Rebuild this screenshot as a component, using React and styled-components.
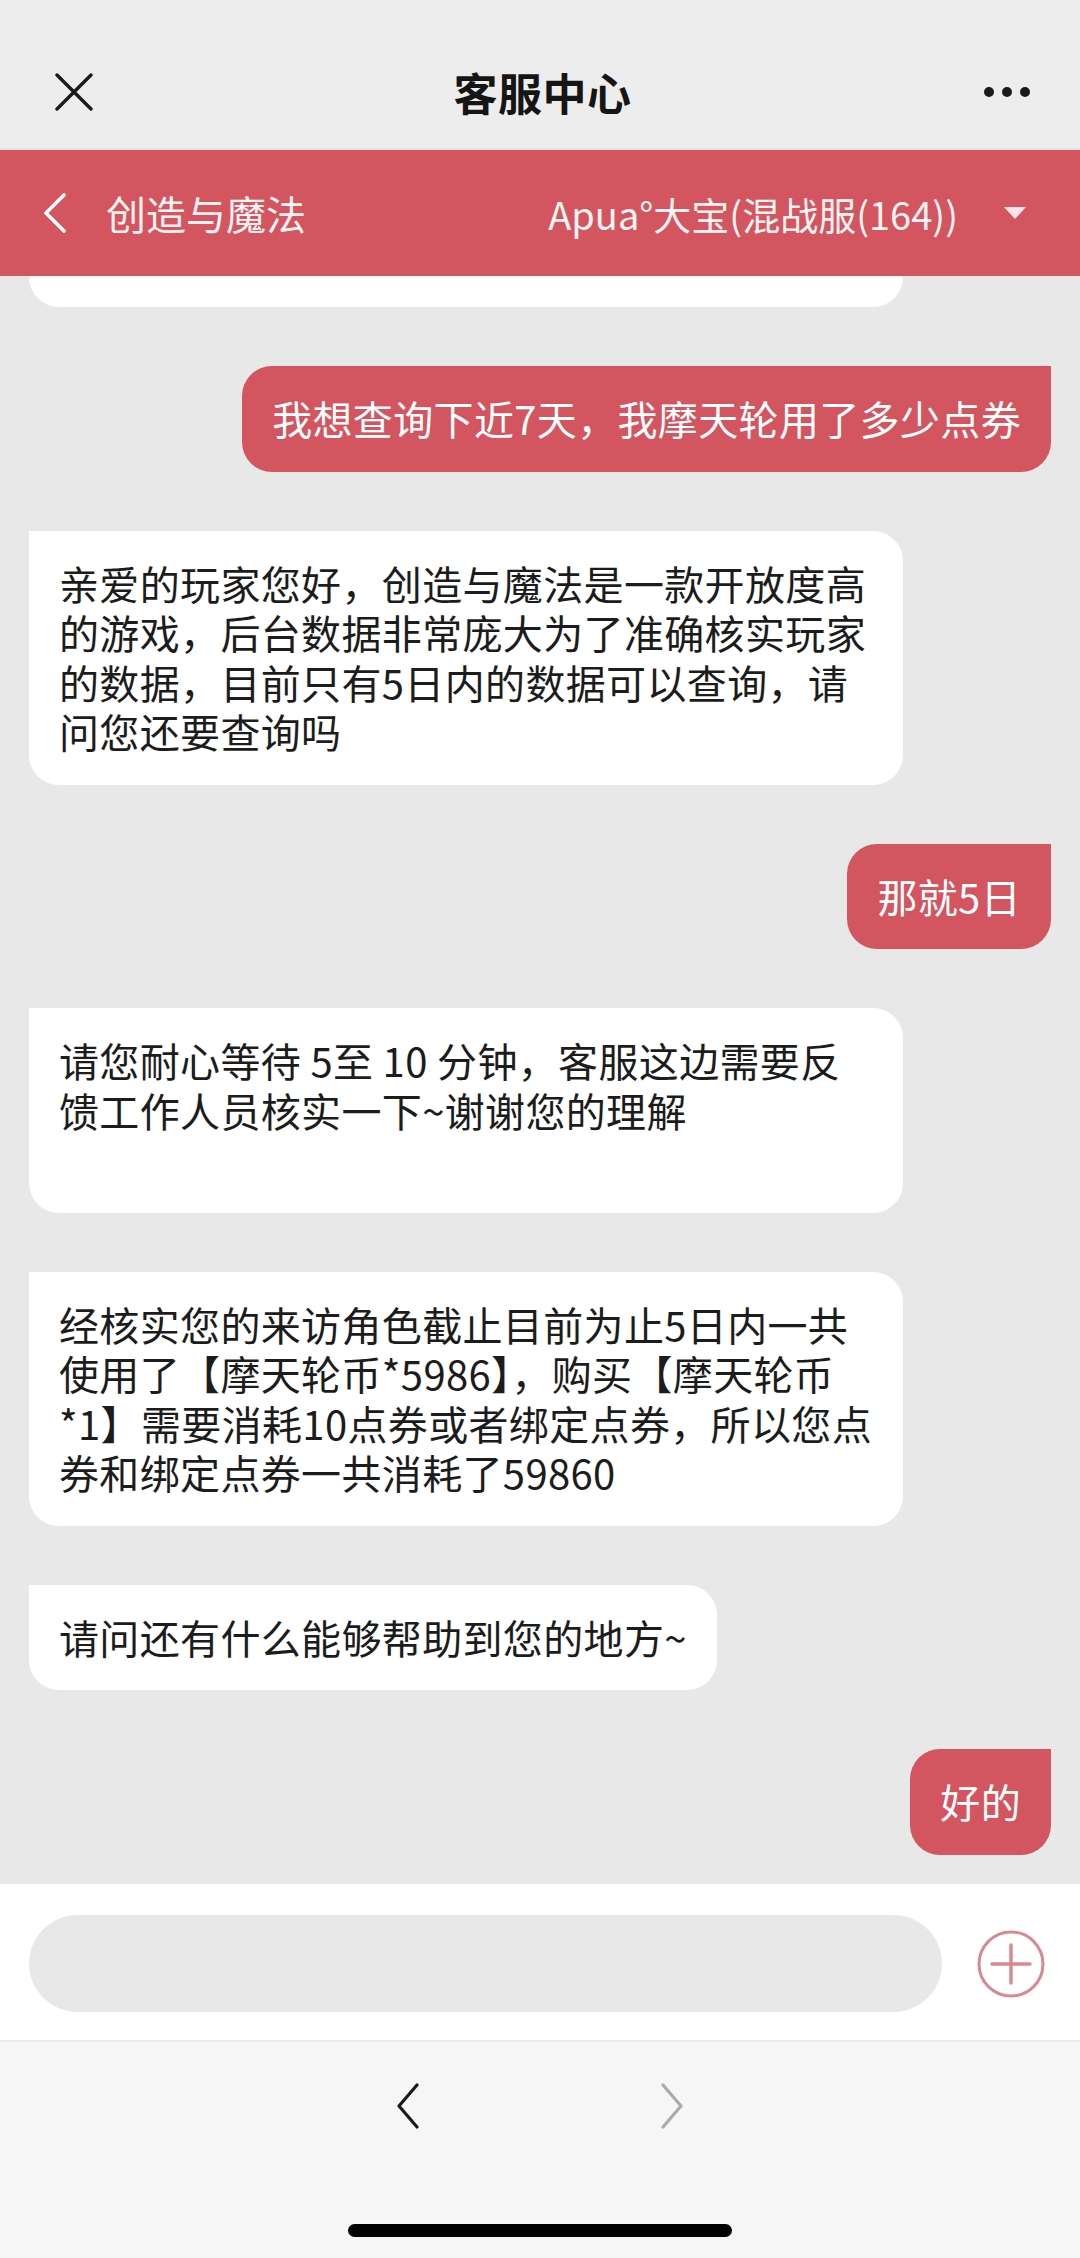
import React from 'react';
import styled, { createGlobalStyle } from 'styled-components';

const RED = '#d3555f';

const GlobalStyle = createGlobalStyle`
  * { box-sizing: border-box; }
  html, body { margin: 0; padding: 0; background: #e8e8e8; }
  body {
    font-family: "Noto Sans CJK SC", "Noto Sans", "Liberation Sans", sans-serif;
  }
`;

const messages = [
  { mine: true, text: '我想查询下近7天，我摩天轮用了多少点券' },
  {
    mine: false,
    full: true,
    text: '亲爱的玩家您好，创造与魔法是一款开放度高\n的游戏，后台数据非常庞大为了准确核实玩家\n的数据，目前只有5日内的数据可以查询，请\n问您还要查询吗',
  },
  { mine: true, text: '那就5日' },
  {
    mine: false,
    full: true,
    text: '请您耐心等待 5至 10 分钟，客服这边需要反\n馈工作人员核实一下~谢谢您的理解\n ',
  },
  {
    mine: false,
    full: true,
    text: '经核实您的来访角色截止目前为止5日内一共\n使用了【摩天轮币*5986】，购买【摩天轮币\n*1】需要消耗10点券或者绑定点券，所以您点\n券和绑定点券一共消耗了59860',
  },
  { mine: false, text: '请问还有什么能够帮助到您的地方~' },
  { mine: true, text: '好的' },
];

const App = () => {
  return (
    <Page>
      <GlobalStyle />
      <TopNav>
        <NavSide>
          <svg width="38" height="38" viewBox="0 0 38 38">
            <path d="M2 2 L36 36 M36 2 L2 36" stroke="#1a1a1a" strokeWidth="3.4" strokeLinecap="round" />
          </svg>
        </NavSide>
        <Title>客服中心</Title>
        <NavSide $right>
          <svg width="46" height="10" viewBox="0 0 46 10">
            <circle cx="5" cy="5" r="5" fill="#1a1a1a" />
            <circle cx="23" cy="5" r="5" fill="#1a1a1a" />
            <circle cx="41" cy="5" r="5" fill="#1a1a1a" />
          </svg>
        </NavSide>
      </TopNav>

      <GameBar>
        <svg width="26" height="40" viewBox="0 0 26 40">
          <path d="M22 2 L4 20 L22 38" fill="none" stroke="#fff" strokeWidth="3.6" strokeLinecap="round" strokeLinejoin="round" />
        </svg>
        <GameName>创造与魔法</GameName>
        <RoleName>Apua°大宝(混战服(164))</RoleName>
        <Caret />
      </GameBar>

      <Chat>
        <CutBubble />
        {messages.map((m, i) => (
          <Bubble key={i} $mine={m.mine} $full={m.full}>
            {m.text}
          </Bubble>
        ))}
      </Chat>

      <InputBar>
        <InputPill />
        <svg width="68" height="68" viewBox="0 0 68 68">
          <circle cx="34" cy="34" r="32" fill="none" stroke="#db8790" strokeWidth="3" />
          <path d="M15 34 H53 M34 15 V53" stroke="#db8790" strokeWidth="3.4" strokeLinecap="round" />
        </svg>
      </InputBar>

      <BrowserBar>
        <NavArrows>
          <svg width="26" height="46" viewBox="0 0 26 46">
            <path d="M22 2 L4 23 L22 44" fill="none" stroke="#1a1a1a" strokeWidth="3.2" strokeLinecap="round" strokeLinejoin="round" />
          </svg>
          <svg width="26" height="46" viewBox="0 0 26 46">
            <path d="M4 2 L22 23 L4 44" fill="none" stroke="#ababab" strokeWidth="3.2" strokeLinecap="round" strokeLinejoin="round" />
          </svg>
        </NavArrows>
        <HomeIndicator />
      </BrowserBar>
    </Page>
  );
};

export default App;

const Page = styled.div`
  width: 1080px;
  height: 2258px;
  display: flex;
  flex-direction: column;
  overflow: hidden;
`;

const TopNav = styled.div`
  flex: none;
  height: 150px;
  padding: 36px 50px 0 55px;
  background: #ededed;
  border-bottom: 2px solid #dfe2e6;
  display: grid;
  grid-template-columns: 1fr auto 1fr;
  align-items: center;
`;

const NavSide = styled.div`
  display: flex;
  justify-content: ${p => p.$right ? 'flex-end' : 'flex-start'};
  align-items: center;
`;

const Title = styled.div`
  font-size: 44px;
  font-weight: 600;
  color: #151515;
  letter-spacing: 0.5px;
`;

const GameBar = styled.div`
  flex: none;
  height: 126px;
  background: ${RED};
  padding: 0 54px 0 42px;
  display: flex;
  align-items: center;
  color: #fff;
`;

const GameName = styled.div`
  margin-left: 38px;
  font-size: 40px;
  color: #fdf3f3;
`;

const RoleName = styled.div`
  margin-left: auto;
  font-size: 38px;
  color: #fdf3f3;
`;

const Caret = styled.div`
  margin-left: 46px;
  width: 0;
  height: 0;
  border-left: 11px solid transparent;
  border-right: 11px solid transparent;
  border-top: 12px solid rgba(255, 255, 255, 0.85);
`;

const Chat = styled.div`
  flex: 1;
  background: #e8e8e8;
  padding: 0 29px 28px;
  display: flex;
  flex-direction: column;
  gap: 59px;
  overflow: hidden;
`;

const CutBubble = styled.div`
  flex: none;
  width: 874px;
  height: 31px;
  background: #fff;
  border-radius: 0 0 30px 30px;
`;

const Bubble = styled.div`
  flex: none;
  align-self: ${p => p.$mine ? 'flex-end' : 'flex-start'};
  width: ${p => p.$full ? '874px' : 'auto'};
  max-width: 874px;
  padding: 28px 30px;
  background: ${p => p.$mine ? RED : '#fff'};
  color: ${p => p.$mine ? '#fff' : '#1c1c1c'};
  border-radius: ${p => p.$mine ? '30px 0 30px 30px' : '0 30px 30px 30px'};
  font-size: 40px;
  line-height: 49.5px;
  letter-spacing: 0.35px;
  white-space: pre;
`;

const InputBar = styled.div`
  flex: none;
  height: 156px;
  background: #fff;
  padding: 31px 35px 28px 29px;
  display: flex;
  align-items: center;
  gap: 35px;
`;

const InputPill = styled.div`
  flex: 1;
  height: 97px;
  border-radius: 49px;
  background: #e8e8e8;
`;

const BrowserBar = styled.div`
  flex: none;
  height: 218px;
  background: #f6f6f6;
  border-top: 2px solid #ececec;
  display: flex;
  flex-direction: column;
  align-items: center;
  padding-top: 41px;
`;

const NavArrows = styled.div`
  display: flex;
  gap: 238px;
`;

const HomeIndicator = styled.div`
  margin-top: auto;
  margin-bottom: 21px;
  width: 384px;
  height: 13px;
  border-radius: 7px;
  background: #000;
`;
